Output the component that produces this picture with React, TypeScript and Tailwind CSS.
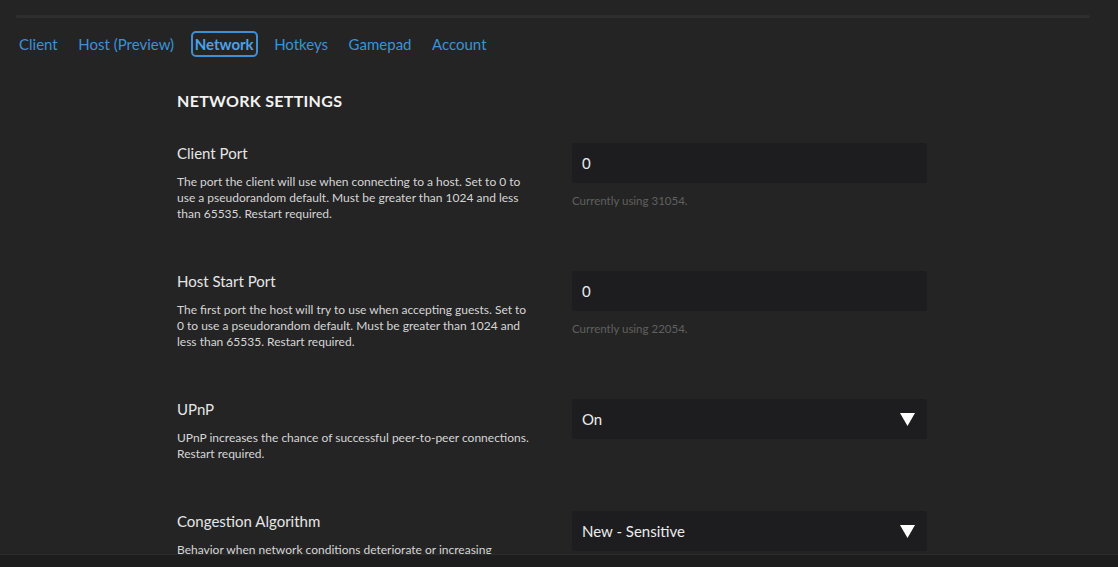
import React from "react";

const tabs = ["Client", "Host (Preview)", "Network", "Hotkeys", "Gamepad", "Account"];

function Caret() {
  return (
    <svg width="15" height="13" viewBox="0 0 15 13" className="shrink-0">
      <polygon points="0,0 15,0 7.5,13" fill="#ffffff" />
    </svg>
  );
}

function Row({
  label,
  desc,
  children,
}: {
  label: string;
  desc: React.ReactNode;
  children: React.ReactNode;
}) {
  return (
    <div className="flex mb-[49px]">
      <div className="w-[395px] shrink-0 pr-[40px]">
        <div className="text-[15px] leading-[20px] text-[#e6e6e6]">{label}</div>
        <p className="mt-[11px] text-[12px] leading-[16px] text-[#d6d6d6]">{desc}</p>
      </div>
      <div className="w-[355px]">{children}</div>
    </div>
  );
}

function PortInput({ value, note }: { value: string; note: string }) {
  return (
    <div>
      <div className="h-[40px] rounded-[3px] bg-[#1d1d1f] flex items-center px-[10px] text-[15px] text-[#ececec]">
        {value}
      </div>
      <div className="mt-[11px] text-[11.5px] leading-[14px] text-[#606060]">{note}</div>
    </div>
  );
}

function Select({ value }: { value: string }) {
  return (
    <div className="h-[40px] rounded-[3px] bg-[#1d1d1f] flex items-center justify-between pl-[10px] pr-[12px] text-[15px] text-[#ececec]">
      <span>{value}</span>
      <Caret />
    </div>
  );
}

export default function App() {
  return (
    <div
      className="h-[567px] w-full flex flex-col overflow-hidden bg-[#242424]"
      style={{ fontFamily: "Lato, 'Noto Sans', sans-serif" }}
    >
      <main className="flex-1 overflow-hidden">
        <div className="pt-[15px] pl-[16px] pr-[28px]">
          <div className="h-[3px] bg-[#2e2e2e] rounded-full" />
        </div>

        <nav className="flex items-center gap-[12.5px] pl-[15px] mt-[13px]">
          {tabs.map((t) => (
            <span
              key={t}
              className={
                t === "Network"
                  ? "px-[2px] h-[26px] flex items-center border-2 border-[#3f8fd4] rounded-[5px] text-[15px] font-bold text-[#4aa2ea]"
                  : "px-[2px] h-[26px] flex items-center border-2 border-transparent text-[15px] text-[#3a93d6]"
              }
            >
              {t}
            </span>
          ))}
        </nav>

        <section className="pl-[177px] mt-[34px]">
          <h2 className="text-[16px] leading-[20px] font-bold tracking-[0.3px] text-[#f2f2f2] mb-[32px]">
            NETWORK SETTINGS
          </h2>

          <Row
            label="Client Port"
            desc="The port the client will use when connecting to a host. Set to 0 to use a pseudorandom default. Must be greater than 1024 and less than 65535. Restart required."
          >
            <PortInput value="0" note="Currently using 31054." />
          </Row>

          <Row
            label="Host Start Port"
            desc="The first port the host will try to use when accepting guests. Set to 0 to use a pseudorandom default. Must be greater than 1024 and less than 65535. Restart required."
          >
            <PortInput value="0" note="Currently using 22054." />
          </Row>

          <Row
            label="UPnP"
            desc="UPnP increases the chance of successful peer-to-peer connections. Restart required."
          >
            <Select value="On" />
          </Row>

          <Row
            label="Congestion Algorithm"
            desc="Behavior when network conditions deteriorate or increasing latency is detected. Restart required."
          >
            <Select value="New - Sensitive" />
          </Row>
        </section>
      </main>
      <footer className="h-[13px] shrink-0 border-t border-[#2c2c2c] bg-[#1d1d1d]" />
    </div>
  );
}
